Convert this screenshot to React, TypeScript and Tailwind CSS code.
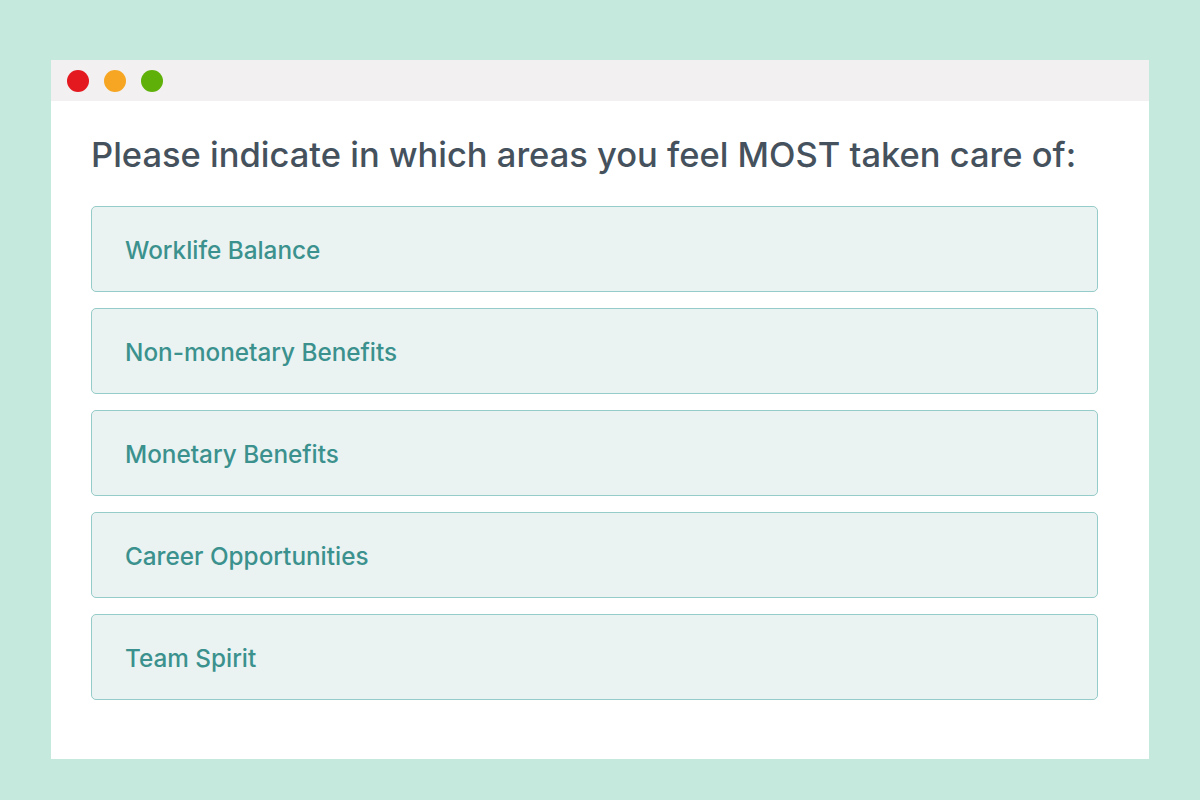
import React from 'react';

const options = [
  'Worklife Balance',
  'Non-monetary Benefits',
  'Monetary Benefits',
  'Career Opportunities',
  'Team Spirit',
];

export default function App() {
  return (
    <div
      className="w-[1200px] h-[800px] bg-[#c5e9dd] pt-[60px] pl-[51px]"
      style={{ fontFamily: 'Inter, Lato, sans-serif' }}
    >
      <div className="w-[1098px] h-[699px] bg-white flex flex-col">
        {/* Window bar */}
        <div className="h-[41px] bg-[#f2f0f0] flex items-center gap-[15px] pl-[16px]">
          <span className="w-[22px] h-[22px] rounded-full bg-[#e3191f]" />
          <span className="w-[22px] h-[22px] rounded-full bg-[#f6a623]" />
          <span className="w-[22px] h-[22px] rounded-full bg-[#5fb10a]" />
        </div>

        <div className="px-[40px] pt-[30px]">
          <h1 className="text-[34.5px] leading-[48px] font-medium text-[#45525d]">
            Please indicate in which areas you feel MOST taken care of:
          </h1>

          <div className="mt-[27px] w-[1007px] flex flex-col gap-[16px]">
            {options.map((opt) => (
              <div
                key={opt}
                className="h-[86px] flex items-center pl-[33px] pt-[2px] bg-[#eaf3f2] border-[1.5px] border-[#95cbc8] rounded-[5px]"
              >
                <span className="text-[24.3px] font-medium text-[#3b918d]">{opt}</span>
              </div>
            ))}
          </div>
        </div>
      </div>
    </div>
  );
}
